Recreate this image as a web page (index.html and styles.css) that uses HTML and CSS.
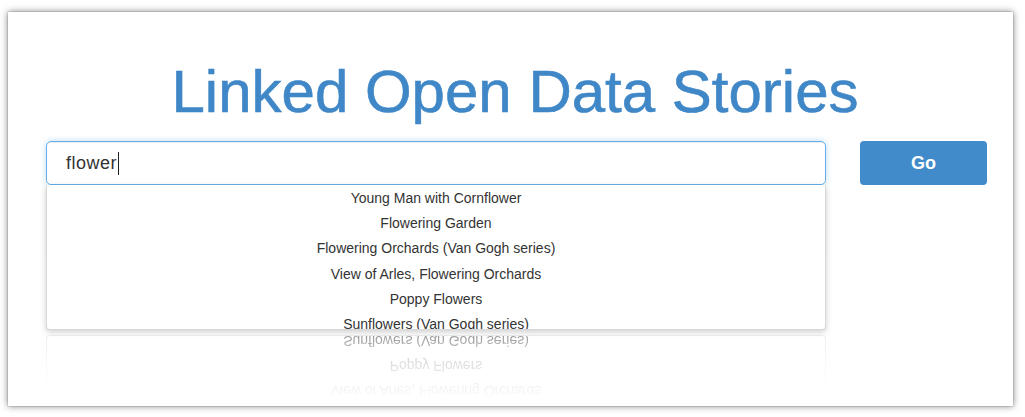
FILE: index.html
```html
<!DOCTYPE html>
<html lang="en">
<head>
<meta charset="utf-8">
<title>Linked Open Data Stories</title>
<link rel="stylesheet" href="styles.css">
</head>
<body>
<div class="window">
  <h1 class="title">Linked Open Data Stories</h1>
  <div class="search-row">
    <div class="search-col">
      <div class="search-input"><span class="typed">flower</span><span class="caret"></span></div>
      <ul class="suggestions">
        <li>Young Man with Cornflower</li>
        <li>Flowering Garden</li>
        <li>Flowering Orchards (Van Gogh series)</li>
        <li>View of Arles, Flowering Orchards</li>
        <li>Poppy Flowers</li>
        <li>Sunflowers (Van Gogh series)</li>
      </ul>
      <ul class="suggestions reflection" aria-hidden="true">
        <li>View of Arles, Flowering Orchards</li>
        <li>Poppy Flowers</li>
        <li>Sunflowers (Van Gogh series)</li>
      </ul>
    </div>
    <button class="go-btn" type="button">Go</button>
  </div>
</div>
</body>
</html>
```
FILE: styles.css
```css
html, body {
  margin: 0;
  padding: 0;
  background: #ffffff;
}

body {
  padding: 12px 12px 11px 8px;
  font-family: "Liberation Sans", Arial, sans-serif;
}

.window {
  width: 1005px;
  height: 394px;
  box-sizing: border-box;
  background: #fff;
  box-shadow: 0 0 1px rgba(0, 0, 0, 0.5), 0 0 7px rgba(0, 0, 0, 0.5);
  padding: 50px 26px 0 38px;
  overflow: hidden;
}

.title {
  margin: 0 0 19px 0;
  font-size: 60px;
  line-height: 60px;
  font-weight: normal;
  color: #3f87c7;
  text-align: center;
  padding-right: 3px;
  -webkit-text-stroke: 0.6px #3f87c7;
}

.search-row {
  display: grid;
  grid-template-columns: 780px 127px;
  column-gap: 34px;
  align-items: start;
}

.search-col {
  display: flex;
  flex-direction: column;
}

.search-input {
  height: 44px;
  box-sizing: border-box;
  border: 1px solid #66afe9;
  border-radius: 5px;
  box-shadow: inset 0 1px 1px rgba(0, 0, 0, 0.075), 0 0 6px rgba(102, 175, 233, 0.45);
  padding: 0 19px;
  display: flex;
  align-items: center;
  font-size: 18px;
  letter-spacing: 0.5px;
  color: #333;
}

.caret {
  display: inline-block;
  width: 1px;
  height: 23px;
  background: #222;
  margin-left: 1px;
}

.suggestions {
  list-style: none;
  margin: 0;
  padding: 0;
  height: 145px;
  flex: none;
  box-sizing: border-box;
  overflow: hidden;
  border: 1px solid rgba(0, 0, 0, 0.15);
  border-top: none;
  border-radius: 0 0 4px 4px;
  background: #fff;
  box-shadow: 0 2px 6px rgba(0, 0, 0, 0.2);
}

.suggestions li {
  height: 25.2px;
  line-height: 25.2px;
  text-align: center;
  font-size: 14px;
  color: #333;
  white-space: nowrap;
  flex: none;
}

.suggestions li:first-child {
  margin-top: 1px;
}

.reflection {
  margin-top: 5px;
  height: 60px;
  display: flex;
  flex-direction: column;
  justify-content: flex-end;
  transform: scaleY(-1);
  box-shadow: 0 0 4px rgba(0, 0, 0, 0.12);
  -webkit-mask-image: linear-gradient(to top, rgba(0, 0, 0, 0.5) 0%, rgba(0, 0, 0, 0.17) 45%, rgba(0, 0, 0, 0.03) 100%);
  mask-image: linear-gradient(to top, rgba(0, 0, 0, 0.5) 0%, rgba(0, 0, 0, 0.17) 45%, rgba(0, 0, 0, 0.03) 100%);
}

.reflection li:first-child {
  margin-top: 0;
}

.reflection li:last-child {
  margin-bottom: -8.2px;
}

.go-btn {
  height: 44px;
  margin: 0;
  border: none;
  border-radius: 4px;
  background: #428bca;
  color: #fff;
  font-family: "Liberation Sans", Arial, sans-serif;
  font-size: 18px;
  font-weight: bold;
  padding: 0;
}
```
